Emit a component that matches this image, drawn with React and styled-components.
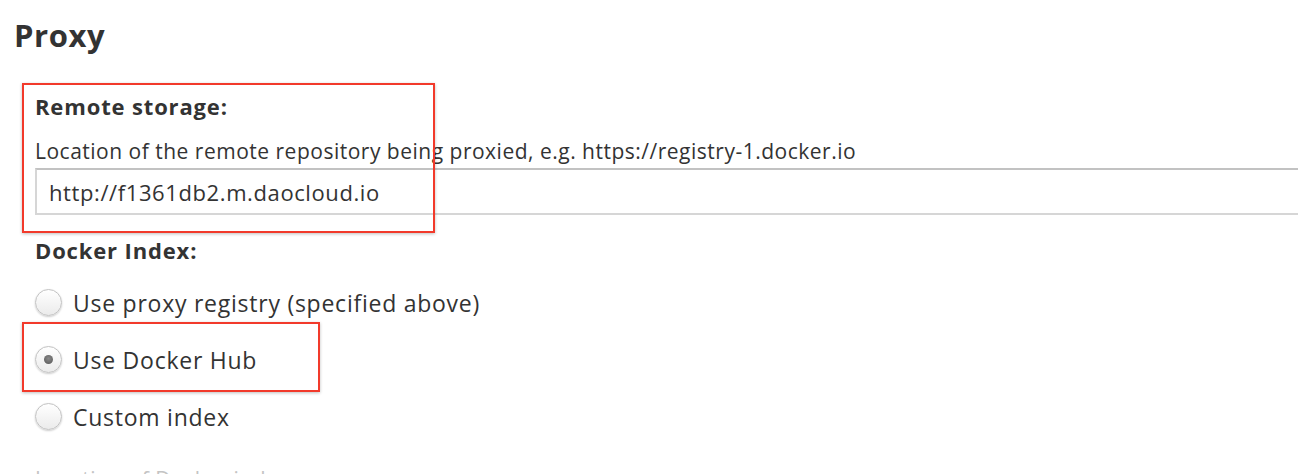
import styled, { createGlobalStyle } from "styled-components";

const GlobalStyle = createGlobalStyle`
  body {
    margin: 0;
    background: #ffffff;
    color: #333333;
    font-family: "Open Sans", "Liberation Sans", sans-serif;
  }
`;

const Page = styled.div`
  padding: 17px 0 0 14px;
  overflow: hidden;
  height: 457px;
`;

const Title = styled.h2`
  margin: 0;
  font-size: 31px;
  line-height: 36px;
  font-weight: 700;
  letter-spacing: 0.6px;
  color: #333;
`;

const Section = styled.div`
  position: relative;
  padding: 41px 0 0 21px;
`;

const Label = styled.div`
  font-size: 22px;
  line-height: 24px;
  font-weight: 700;
  letter-spacing: 0.85px;
  margin-top: ${(p) => p.$top || 0}px;
`;

const Help = styled.div`
  font-size: 21px;
  line-height: 24px;
  letter-spacing: 0.5px;
  margin-top: ${(p) => p.$top || 21}px;
  color: ${(p) => (p.$faded ? "#c4c4c4" : "#333")};
`;

const Input = styled.input`
  display: block;
  box-sizing: border-box;
  margin-top: 5px;
  width: calc(100% + 40px);
  height: 47px;
  padding: 0 12px;
  border: 2px solid #d6d6d6;
  border-top-color: #c2c2c2;
  border-right: none;
  font-family: inherit;
  font-size: 22px;
  letter-spacing: 0.6px;
  color: #333;
  background: #fff;
  outline: none;
`;

const Options = styled.div`
  margin-top: 12px;
`;

const Option = styled.label`
  display: flex;
  align-items: center;
  gap: 11px;
  height: 57px;
  font-size: 23px;
  letter-spacing: 0.75px;
`;

const Radio = styled.span`
  box-sizing: border-box;
  flex: none;
  width: 27px;
  height: 27px;
  border-radius: 50%;
  border: 1px solid #c2c2c2;
  background: linear-gradient(#ffffff, #ebebeb);
  box-shadow: 0 1px 2px rgba(0, 0, 0, 0.2);
  display: flex;
  align-items: center;
  justify-content: center;

  &::after {
    content: "";
    display: ${(p) => (p.$checked ? "block" : "none")};
    width: 9px;
    height: 9px;
    border-radius: 50%;
    background: radial-gradient(circle at 50% 40%, #8a8a8a, #555);
  }
`;

const Mark = styled.div`
  position: absolute;
  left: 8px;
  top: ${(p) => p.$top}px;
  width: ${(p) => p.$w}px;
  height: ${(p) => p.$h}px;
  box-sizing: border-box;
  border: 2px solid #f23a2b;
  box-shadow: 0 1px 3px rgba(0, 0, 0, 0.25);
  pointer-events: none;
`;

const options = [
  { text: "Use proxy registry (specified above)", checked: false },
  { text: "Use Docker Hub", checked: true },
  { text: "Custom index", checked: false },
];

const App = () => {
  return (
    <>
      <GlobalStyle />
      <Page>
        <Title>Proxy</Title>
        <Section>
          <Label>Remote storage:</Label>
          <Help>Location of the remote repository being proxied, e.g. https://registry-1.docker.io</Help>
          <Input defaultValue="http://f1361db2.m.daocloud.io" readOnly />
          <Label $top={23}>Docker Index:</Label>
          <Options>
            {options.map((o) => (
              <Option key={o.text}>
                <Radio $checked={o.checked} />
                {o.text}
              </Option>
            ))}
          </Options>
          <Help $faded $top={22}>Location of Docker index</Help>
          <Mark $top={30} $w={413} $h={150} />
          <Mark $top={269} $w={298} $h={70} />
        </Section>
      </Page>
    </>
  );
};

export default App;
